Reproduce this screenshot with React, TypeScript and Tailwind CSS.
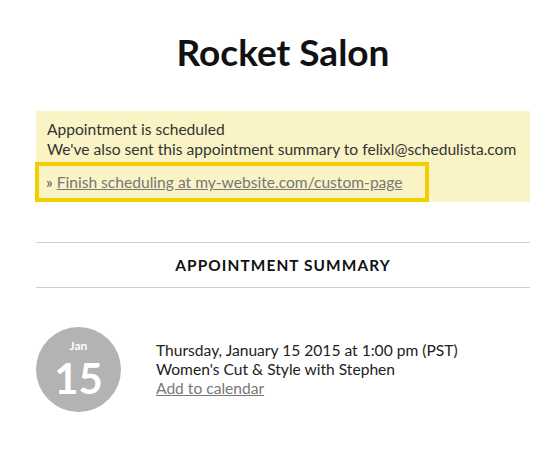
import React from "react";

export default function App() {
  return (
    <div className="w-[556px] h-[452px] bg-white overflow-hidden" style={{ fontFamily: "Lato, 'Open Sans', sans-serif" }}>
      <div className="ml-[36px] w-[494px]">
        <h1 className="pt-[28px] text-center text-[37px] leading-[48px] font-bold text-[#111]">Rocket Salon</h1>
        <div className="mt-[35px] bg-[#faf3c5] pt-[8px] pb-0">
          <div className="px-[11px] text-[15.6px] leading-[20px] text-[#333]">
            <div>Appointment is scheduled</div>
            <div>We've also sent this appointment summary to felixl@schedulista.com</div>
          </div>
          <div className="mt-[3px] w-[394px] -ml-[1px] border-[4px] border-[#f2cd00] px-[7px] py-[6px] text-[15.6px] leading-[20px] text-[#777]">
            <span className="mr-[4px] text-[#555]">»</span>
            <span className="underline">Finish scheduling at my-website.com/custom-page</span>
          </div>
        </div>
        <div className="mt-[40px] border-t border-b border-[#cfcfcf] py-[14px] text-center text-[15.4px] leading-[16px] font-bold tracking-[1.1px] text-[#111]">
          APPOINTMENT SUMMARY
        </div>
        <div className="mt-[39px] flex items-center">
          <div className="w-[85px] h-[85px] shrink-0 rounded-full bg-[#b3b3b3] flex flex-col items-center justify-start pt-[12px] text-white">
            <div className="text-[12px] leading-[14px] font-bold">Jan</div>
            <div className="text-[42px] leading-[50px] font-bold">15</div>
          </div>
          <div className="ml-[35px] text-[15.6px] leading-[19px] text-[#222]">
            <div>Thursday, January 15 2015 at 1:00 pm (PST)</div>
            <div>Women's Cut &amp; Style with Stephen</div>
            <div className="text-[#777] underline">Add to calendar</div>
          </div>
        </div>
      </div>
    </div>
  );
}
